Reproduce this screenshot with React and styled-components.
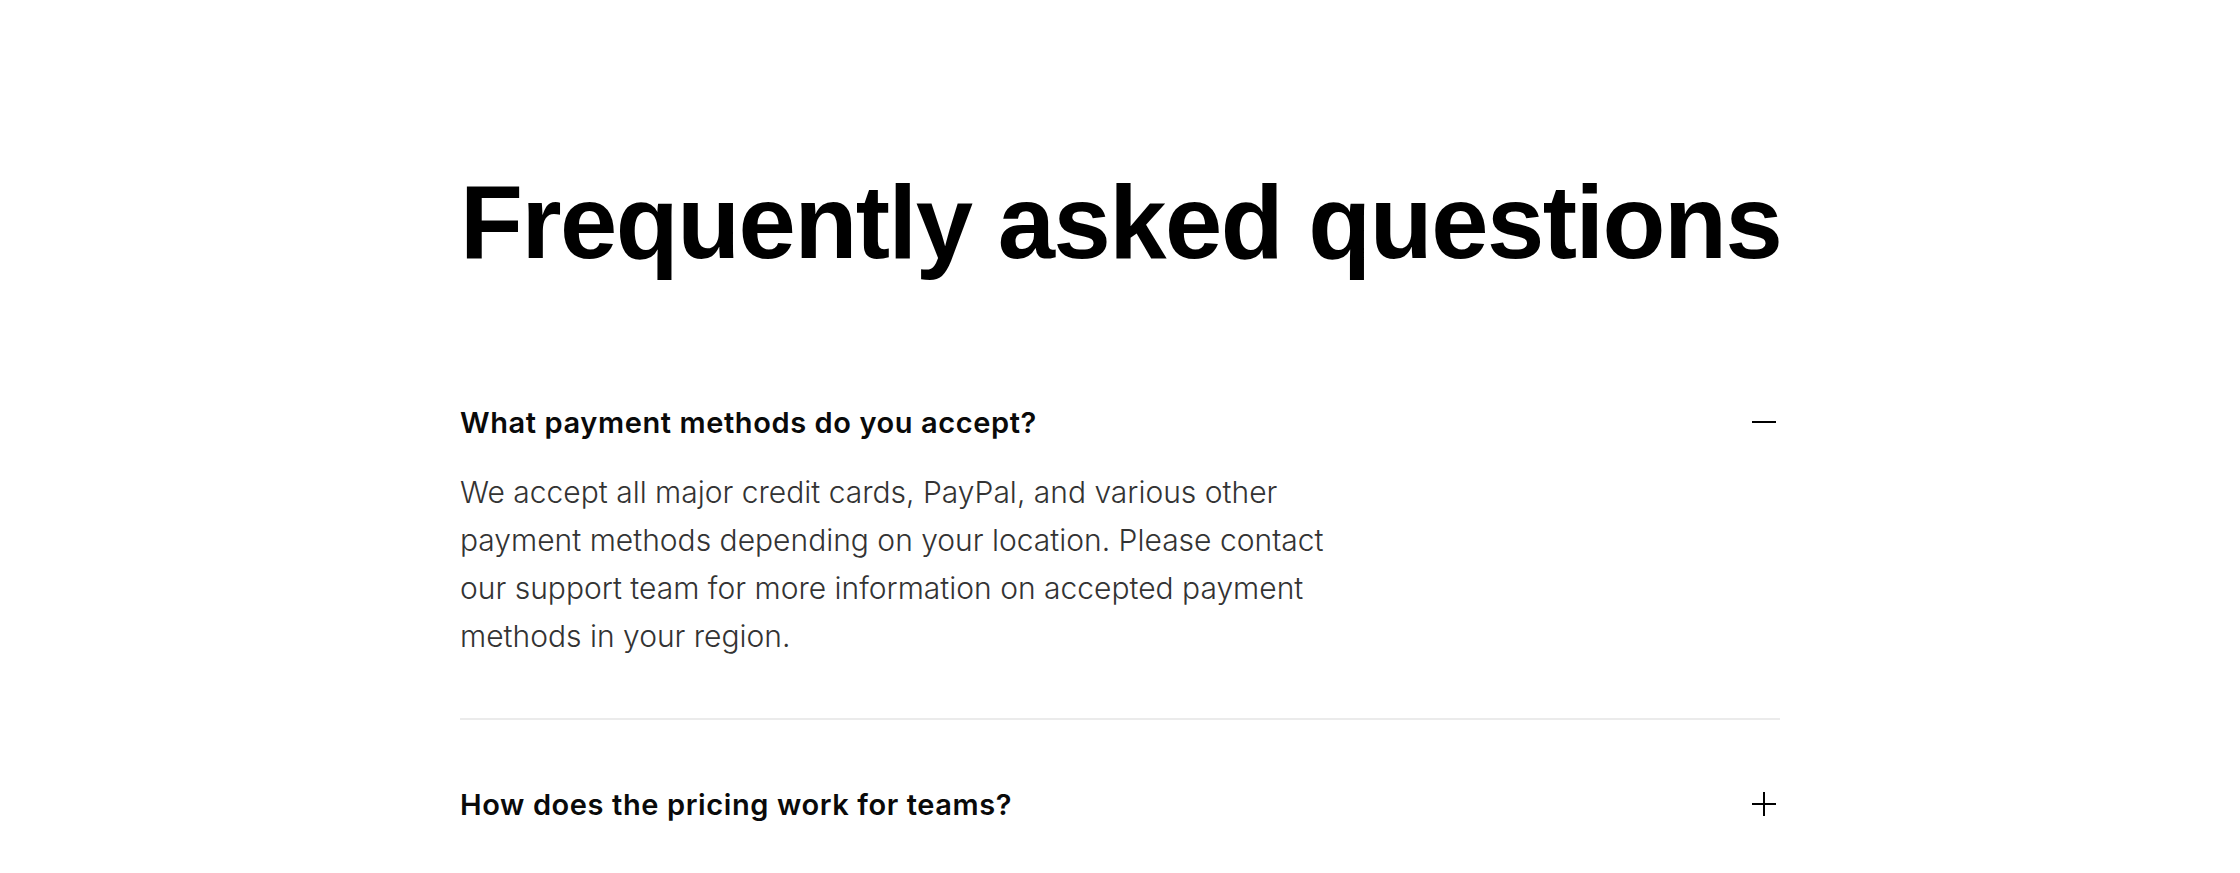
import React, { useState } from "react";
import styled, { createGlobalStyle } from "styled-components";

const GlobalStyle = createGlobalStyle`
  html, body { margin: 0; padding: 0; background: #ffffff; }
  body { font-family: "Inter", "Liberation Sans", sans-serif; color: #000; }
  * { box-sizing: border-box; }
`;

const Page = styled.main`
  max-width: 1320px;
  margin: 0 auto;
  padding-top: 171px;
`;

const Title = styled.h1`
  margin: 0 0 64px;
  font-family: "Liberation Sans", Arial, sans-serif;
  font-weight: 700;
  font-size: 103px;
  line-height: 103px;
  letter-spacing: -1.5px;
  word-spacing: -1px;
  white-space: nowrap;
  color: #000;
`;

const List = styled.div`
  display: flex;
  flex-direction: column;
`;

const Item = styled.section`
  padding: 64px 0 ${(p) => (p.$open ? "58px" : "64px")};
  border-bottom: 2px solid #ebebeb;
  &:last-child { border-bottom: none; }
`;

const QuestionButton = styled.button`
  all: unset;
  width: 100%;
  height: 40px;
  display: flex;
  align-items: center;
  justify-content: space-between;
  cursor: pointer;
`;

const QuestionText = styled.span`
  font-family: "Inter", "Liberation Sans", sans-serif;
  font-weight: 600;
  font-size: 29px;
  letter-spacing: 0.6px;
  color: #0a0a0a;
`;

const IconBox = styled.span`
  width: 32px;
  height: 32px;
  display: flex;
  align-items: center;
  justify-content: center;
  flex: none;
`;

const Answer = styled.p`
  margin: 26px 0 0;
  max-width: 900px;
  font-family: "Inter", "Liberation Sans", sans-serif;
  font-weight: 300;
  font-size: 30px;
  line-height: 48px;
  letter-spacing: 0;
  color: #333333;
`;

const ToggleIcon = ({ open }) => (
  <svg width="32" height="32" viewBox="0 0 32 32" fill="none" stroke="#000" strokeWidth="2">
    <line x1="4" y1="16" x2="28" y2="16" />
    {!open && <line x1="16" y1="4" x2="16" y2="28" />}
  </svg>
);

const faqs = [
  {
    q: "What payment methods do you accept?",
    a: "We accept all major credit cards, PayPal, and various other payment methods depending on your location. Please contact our support team for more information on accepted payment methods in your region.",
  },
  {
    q: "How does the pricing work for teams?",
    a: "Our team plans are billed per seat, so you only pay for the members who use the product. Volume discounts are available for larger teams.",
  },
];

export default function App() {
  const [open, setOpen] = useState(0);
  return (
    <>
      <GlobalStyle />
      <Page>
        <Title>Frequently asked questions</Title>
        <List>
          {faqs.map((f, i) => {
            const isOpen = open === i;
            return (
              <Item key={f.q} $open={isOpen}>
                <QuestionButton onClick={() => setOpen(isOpen ? -1 : i)}>
                  <QuestionText>{f.q}</QuestionText>
                  <IconBox>
                    <ToggleIcon open={isOpen} />
                  </IconBox>
                </QuestionButton>
                {isOpen && <Answer>{f.a}</Answer>}
              </Item>
            );
          })}
        </List>
      </Page>
    </>
  );
}
